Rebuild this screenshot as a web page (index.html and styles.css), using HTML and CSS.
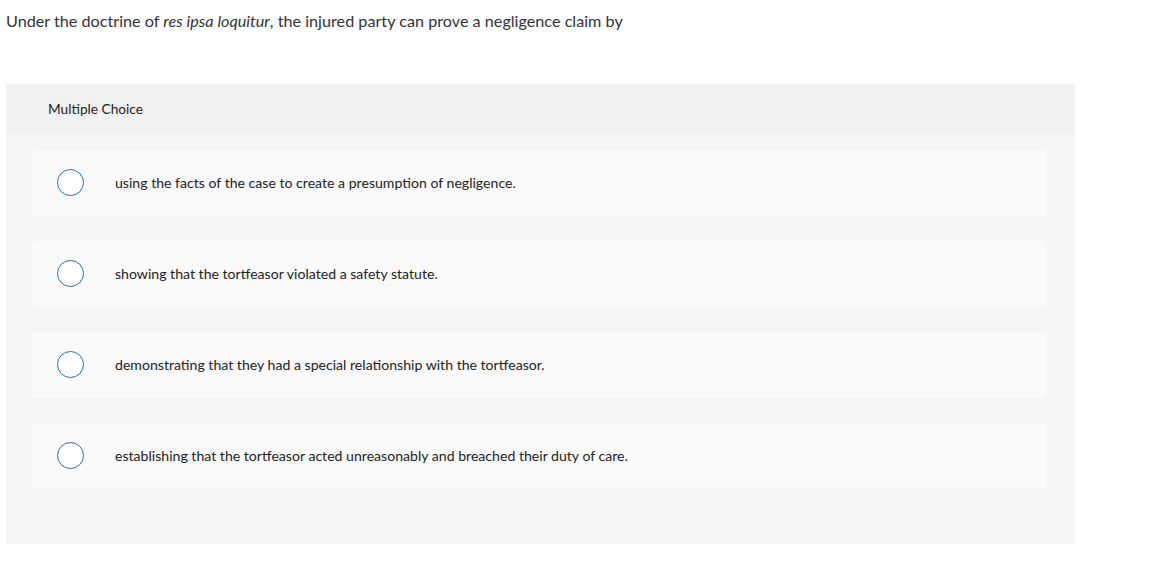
FILE: index.html
```html
<!DOCTYPE html>
<html>
<head>
<meta charset="utf-8">
<link rel="stylesheet" href="styles.css">
</head>
<body>
<p class="question">Under the doctrine of <em>res ipsa loquitur</em>, the injured party can prove a negligence claim by</p>
<div class="panel">
  <div class="panel-head">Multiple Choice</div>
  <div class="options">
    <div class="option"><span class="radio"></span><span class="label">using the facts of the case to create a presumption of negligence.</span></div>
    <div class="option"><span class="radio"></span><span class="label">showing that the tortfeasor violated a safety statute.</span></div>
    <div class="option"><span class="radio"></span><span class="label">demonstrating that they had a special relationship with the tortfeasor.</span></div>
    <div class="option"><span class="radio"></span><span class="label">establishing that the tortfeasor acted unreasonably and breached their duty of care.</span></div>
  </div>
</div>
</body>
</html>
```
FILE: styles.css
```css
html, body { margin: 0; padding: 0; background: #fff; }
body {
  font-family: Lato, "Liberation Sans", sans-serif;
  color: #333;
  padding: 0 6px;
}
.question {
  margin: 0;
  padding-top: 11px;
  font-size: 16.2px;
  line-height: 20px;
  color: #333;
}
.question em { font-style: italic; }
.panel {
  margin-top: 53px;
  width: 1069px;
  background: #f5f5f5;
  border-radius: 0 0 3px 3px;
}
.panel-head {
  height: 50px;
  background: #f1f1f1;
  padding-left: 42px;
  padding-bottom: 2px;
  box-sizing: border-box;
  display: flex;
  align-items: center;
  font-size: 13.7px;
  color: #222;
}
.options {
  padding: 16px 28px 55px 26px;
  display: flex;
  flex-direction: column;
  gap: 25px;
}
.option {
  height: 66px;
  box-sizing: border-box;
  background: #fafafa;
  border-radius: 3px;
  display: flex;
  align-items: center;
  padding-left: 25px;
  padding-bottom: 1px;
}
.radio {
  width: 25px;
  height: 25px;
  border: 1.5px solid #2a6aa3;
  border-radius: 50%;
  background: #fff;
  flex: none;
}
.label {
  margin-left: 31px;
  font-size: 14.1px;
  color: #222;
}
```
